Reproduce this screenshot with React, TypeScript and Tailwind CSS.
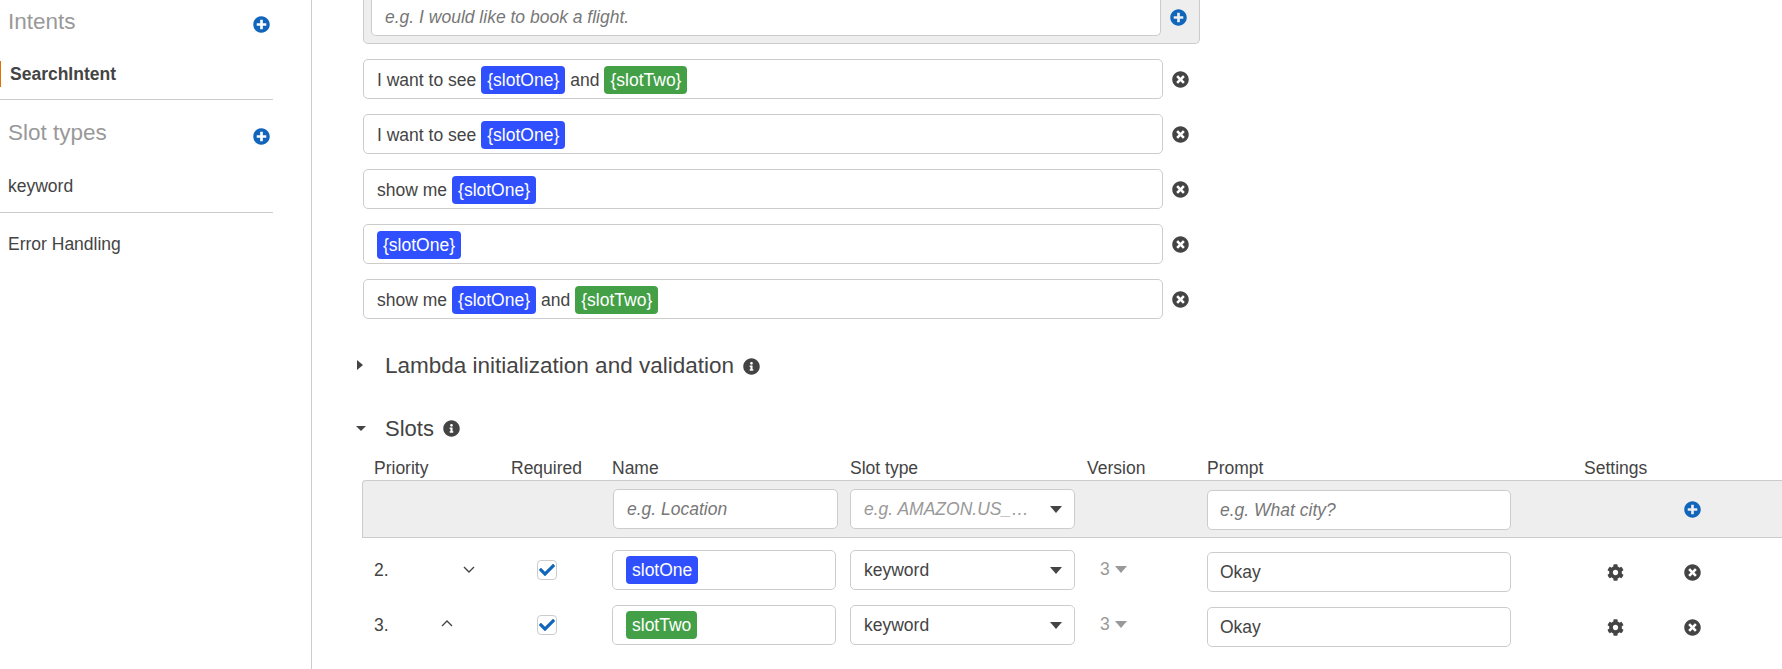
import React from 'react';
import { FaCheck, FaCog, FaInfoCircle, FaPlusCircle, FaTimesCircle } from 'react-icons/fa';

const Pill = ({ color, children }: { color: 'blue' | 'green'; children: React.ReactNode }) => (
  <span className={`inline-flex h-7 items-center rounded-[4px] px-1.5 text-white ${color === 'blue' ? 'bg-[#304ffe]' : 'bg-[#43a047]'}`}>
    {children}
  </span>
);

const One = () => <Pill color="blue">{'{slotOne}'}</Pill>;
const Two = () => <Pill color="green">{'{slotTwo}'}</Pill>;

const Caret = ({ className = 'border-t-[#444]' }: { className?: string }) => (
  <span className={`h-0 w-0 border-x-[6.5px] border-t-[7px] border-x-transparent ${className}`} />
);

const Chevron = ({ up, className }: { up?: boolean; className: string }) => (
  <svg width="12" height="7" viewBox="0 0 12 7" fill="none" stroke="#444" strokeWidth="1.4" className={className}>
    <path d={up ? 'M1 6 L6 1 L11 6' : 'M1 1 L6 6 L11 1'} />
  </svg>
);

const Utterance = ({ children }: { children: React.ReactNode }) => (
  <div className="flex items-center">
    <div className="flex h-10 w-[800px] items-center gap-[5px] rounded-[5px] border border-[#ccc] bg-white px-[13px] pt-[2px]">{children}</div>
    <FaTimesCircle className="ml-[9px] text-[17px] text-[#444]" />
  </div>
);

const SlotRow = ({ num, name, dir }: { num: string; name: React.ReactNode; dir: 'up' | 'down' }) => (
  <div className="grid h-10 grid-cols-[137px_101px_238px_237px_120px_377px_100px_1fr] items-center pl-3">
    <div className="relative flex items-center">
      <span>{num}</span>
      {dir === 'down' ? <Chevron className="absolute left-[89px] top-[9px]" /> : <Chevron up className="absolute left-[67px] top-[8px]" />}
    </div>
    <div>
      <span className="ml-[26px] flex h-5 w-5 items-center justify-center rounded-[4px] border border-[#ccc] bg-white">
        <FaCheck className="text-[16px] text-[#1166bb]" />
      </span>
    </div>
    <div className="flex h-10 w-[224px] items-center rounded-[5px] border border-[#ccc] bg-white px-[13px]">{name}</div>
    <div className="flex h-10 w-[225px] items-center justify-between rounded-[5px] border border-[#ccc] bg-white pl-[13px] pr-[12px]">
      <span>keyword</span>
      <Caret />
    </div>
    <div className="flex items-center gap-[5px] pb-[2px] pl-[13px] text-[#999]">
      <span>3</span>
      <Caret className="border-t-[#999]" />
    </div>
    <div className="flex h-10 w-[304px] translate-y-[2px] items-center rounded-[5px] border border-[#ccc] bg-white px-3">Okay</div>
    <div className="translate-y-[2px] pl-[23px]">
      <FaCog className="text-[17px] text-[#444]" />
    </div>
    <div className="translate-y-[2px]">
      <FaTimesCircle className="text-[17px] text-[#444]" />
    </div>
  </div>
);

export default function App() {
  return (
    <div className="flex h-[669px] overflow-hidden bg-white text-[17.5px] text-[#444] [font-family:'Liberation_Sans',Arial,sans-serif]">
      <aside className="w-[312px] shrink-0 border-r border-[#ccc]">
        <div className="w-[273px]">
          <div className="flex h-[61px] justify-between pl-2 pr-[3px]">
            <span className="mt-[9px] text-[22.5px] leading-[26px] text-[#999]">Intents</span>
            <FaPlusCircle className="mt-4 text-[17px] text-[#1166bb]" />
          </div>
          <div className="flex h-[26px] items-center border-l border-[#e07000] pl-[9px] font-bold">SearchIntent</div>
          <div className="mt-3 flex h-[63px] justify-between border-t border-[#ccc] pl-2 pr-[3px]">
            <span className="mt-[20px] text-[22.5px] leading-[26px] text-[#999]">Slot types</span>
            <FaPlusCircle className="mt-[28px] text-[17px] text-[#1166bb]" />
          </div>
          <div className="flex h-[51px] items-start border-b border-[#ccc] pl-2 pt-[11px]">keyword</div>
          <div className="mt-[18px] pl-2">Error Handling</div>
        </div>
      </aside>

      <main className="min-w-0 flex-1 pl-[51px]">
        <div className="flex h-11 w-[837px] items-start rounded-b-[5px] border border-t-0 border-[#ccc] bg-[#eee] pl-[7px]">
          <div className="flex h-[36px] w-[790px] items-center rounded-b-[5px] border border-t-0 border-[#ccc] bg-white pl-[13px] italic text-[#777]">
            e.g. I would like to book a flight.
          </div>
          <FaPlusCircle className="ml-[9px] mt-[9px] text-[17px] text-[#1166bb]" />
        </div>

        <div className="mt-[15px] flex flex-col gap-[15px]">
          <Utterance>I want to see <One /> and <Two /></Utterance>
          <Utterance>I want to see <One /></Utterance>
          <Utterance>show me <One /></Utterance>
          <Utterance><One /></Utterance>
          <Utterance>show me <One /> and <Two /></Utterance>
        </div>

        <div className="relative mt-[31px] flex h-8 items-center pl-[22px] text-[22.5px]">
          <span className="absolute left-[-6px] top-[10px] h-0 w-0 border-y-[5.5px] border-l-[6px] border-y-transparent border-l-[#444]" />
          <span>Lambda initialization and validation</span>
          <FaInfoCircle className="ml-[9px] text-[17px] text-[#444]" />
        </div>

        <div className="relative mt-[30px] flex h-8 items-center pl-[22px] text-[22px]">
          <span className="absolute left-[-7px] top-[14px] h-0 w-0 border-x-[5.5px] border-t-[5px] border-x-transparent border-t-[#444]" />
          <span>Slots</span>
          <FaInfoCircle className="ml-[9px] text-[17px] text-[#444]" />
        </div>

        <div className="mt-[11px] -ml-px">
          <div className="grid h-[22px] grid-cols-[137px_101px_238px_237px_120px_377px_1fr] items-center pl-3">
            <span>Priority</span>
            <span>Required</span>
            <span>Name</span>
            <span>Slot type</span>
            <span>Version</span>
            <span>Prompt</span>
            <span>Settings</span>
          </div>
          <div className="mt-[3px] grid h-[58px] grid-cols-[137px_101px_237px_237px_120px_377px_100px_1fr] items-center rounded-tl-[4px] border-y border-l border-[#ccc] bg-[#eee] pl-3">
            <span />
            <span />
            <div className="flex h-10 w-[225px] items-center rounded-[5px] border border-[#ccc] bg-white px-[13px] italic text-[#777]">e.g. Location</div>
            <div className="flex h-10 w-[225px] items-center justify-between rounded-[5px] border border-[#ccc] bg-white pl-[13px] pr-[12px] italic text-[#999]">
              <span>e.g. AMAZON.US_…</span>
              <Caret />
            </div>
            <span />
            <div className="flex h-10 w-[304px] translate-y-px items-center rounded-[5px] border border-[#ccc] bg-white px-3 italic text-[#777]">e.g. What city?</div>
            <span />
            <FaPlusCircle className="text-[17px] text-[#1166bb]" />
          </div>
          <div className="mt-3 flex flex-col gap-[15px]">
            <SlotRow num="2." dir="down" name={<Pill color="blue">slotOne</Pill>} />
            <SlotRow num="3." dir="up" name={<Pill color="green">slotTwo</Pill>} />
          </div>
        </div>
      </main>
    </div>
  );
}
